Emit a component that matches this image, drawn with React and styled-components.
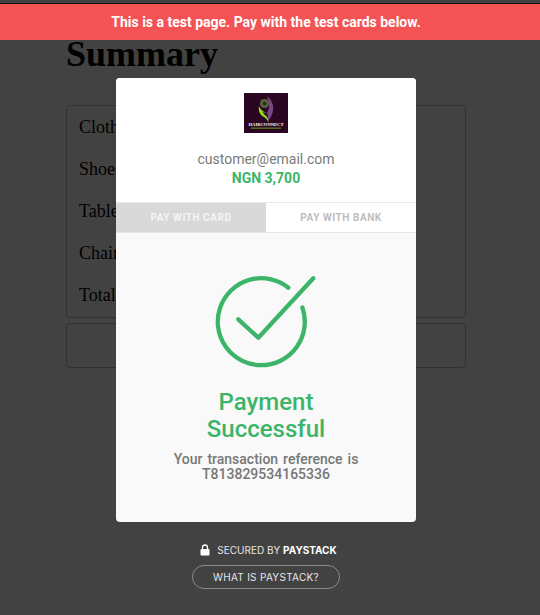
import React from "react";
import styled, { createGlobalStyle } from "styled-components";

const Global = createGlobalStyle`
  html, body { margin: 0; padding: 0; height: 100%; background: #fff; overflow: hidden; }
  #root { height: 615px; position: relative; overflow: hidden; }
  * { box-sizing: border-box; }
`;

const Page = styled.main`
  width: 400px;
  margin: 0 0 0 66px;
  padding-top: 33px;
  font-family: "Liberation Serif", serif;
  font-size: 18px;
  color: #000;
`;
const Title = styled.h1`
  margin: 0 0 30px 0;
  font-size: 36px;
  line-height: 42px;
  font-weight: 700;
`;
const Card = styled.div`
  border: 1px solid rgba(0, 0, 0, 0.25);
  border-radius: 4px;
  height: ${(p) => p.$h}px;
  margin-bottom: 5px;
`;
const ItemRow = styled.div`
  height: 42px;
  padding: 0 12px;
  line-height: 42px;
`;
const Overlay = styled.div`
  position: absolute;
  inset: 0;
  background: rgba(0, 0, 0, 0.74);
  display: flex;
  flex-direction: column;
  align-items: center;
  padding: 4px 8px 0 0;
  font-family: Roboto, sans-serif;
`;
const TopLine = styled.div`
  position: absolute;
  top: 3px;
  left: 0;
  right: 0;
  height: 1px;
  background: #111;
`;
const Banner = styled.div`
  align-self: stretch;
  margin-right: -8px;
  padding-right: 8px;
  height: 36px;
  background: #f35355;
  color: #fff;
  font-size: 14px;
  font-weight: 700;
  line-height: 36px;
  text-align: center;
`;
const Modal = styled.section`
  width: 300px;
  height: 444px;
  margin-top: 38px;
  border-radius: 4px;
  overflow: hidden;
  background: #f9f9f9;
  display: flex;
  flex-direction: column;
`;
const Header = styled.header`
  height: 124px;
  background: #fff;
  display: flex;
  flex-direction: column;
  align-items: center;
  padding-top: 15px;
`;
const LogoBox = styled.svg`
  display: block;
  width: 44px;
  height: 40px;
  margin-bottom: 17px;
`;
const Email = styled.div`
  font-size: 14px;
  line-height: 18px;
  color: #7a7a7a;
`;
const Amount = styled.div`
  font-size: 14px;
  line-height: 20px;
  font-weight: 700;
  color: #3cb568;
`;
const Tabs = styled.nav`
  height: 31px;
  display: flex;
  border-top: 1px solid #e8e8e8;
  border-bottom: 1px solid #e8e8e8;
  background: #fff;
`;
const Tab = styled.div`
  flex: 1;
  font-size: 10px;
  font-weight: 700;
  letter-spacing: 0.55px;
  text-align: center;
  line-height: 29px;
  color: ${(p) => (p.$active ? "#f5f5f5" : "#bdbdbd")};
  background: ${(p) => (p.$active ? "#d9d9d9" : "#fff")};
`;
const Body = styled.div`
  flex: 1;
  display: flex;
  flex-direction: column;
  align-items: center;
  padding-top: 41px;
`;
const Check = styled.svg`
  display: block;
  width: 104px;
  height: 96px;
  margin-bottom: 19px;
`;
const Heading = styled.h2`
  margin: 0 0 9px;
  width: 160px;
  font-size: 24px;
  line-height: 27px;
  font-weight: 500;
  color: #3cb568;
  text-align: center;
`;
const Reference = styled.p`
  margin: 0;
  font-size: 14px;
  line-height: 15px;
  font-weight: 500;
  word-spacing: 1.5px;
  color: #777;
  text-align: center;
`;
const Secured = styled.div`
  margin: 21px 0 0 5px;
  display: flex;
  align-items: center;
  gap: 7px;
  font-family: Inter, sans-serif;
  font-size: 10px;
  line-height: 14px;
  color: #e6e6e6;
  b { color: #fff; font-weight: 700; }
`;
const WhatIs = styled.button`
  margin-top: 8px;
  width: 148px;
  height: 24px;
  border: 1px solid #8a8a8a;
  border-radius: 12px;
  background: transparent;
  padding: 0;
  font-family: Inter, sans-serif;
  font-size: 10px;
  letter-spacing: 0.3px;
  color: #e6e6e6;
`;
const LogoText = styled.text`
  font-family: "Liberation Serif", serif;
  font-size: 4.600px;
  font-weight: 700;
  fill: #fff;
`;

export default function App() {
  return (
    <>
      <Global />
      <Page>
        <Title>Summary</Title>
        <Card $h={213}>
          {["Clothes", "Shoes", "Tables", "Chairs", "Total"].map((t) => (
            <ItemRow key={t}>{t}</ItemRow>
          ))}
        </Card>
        <Card $h={45} />
      </Page>
      <Overlay>
        <TopLine />
        <Banner>This is a test page. Pay with the test cards below.</Banner>
        <Modal>
          <Header>
            <LogoBox viewBox="0 0 44 40">
              <rect width="44" height="40" fill="#2a0622" />
              <path d="M23 3c5 4 7 10 6 15-1 5-3 7-5 10 0-4 0-6-1-8 1-2 2-4 2-7 0-3-1-7-2-10z" fill="#7a4488" />
              <path d="M15 13c-1 5 1 9 5 11 3 2 4 4 4 6 1-3 0-6-3-8-1-1-2-2-2-3 2 1 4 1 5 2-3-2-7-3-9-8z" fill="#93d61c" />
              <circle cx="20.500" cy="10.500" r="4.500" fill="#59683a" />
              <circle cx="20.500" cy="10.500" r="2" fill="#2f2a24" />
              <LogoText x="22" y="33" textAnchor="middle">HAIRCONNECT</LogoText>
              <rect x="7" y="34.500" width="30" height="1.300" fill="#5f7a1c" />
            </LogoBox>
            <Email>customer@email.com</Email>
            <Amount>NGN 3,700</Amount>
          </Header>
          <Tabs>
            <Tab $active>PAY WITH CARD</Tab>
            <Tab>PAY WITH BANK</Tab>
          </Tabs>
          <Body>
            <Check viewBox="0 0 104 96" fill="none" stroke="#3cb568" strokeWidth="4.300" strokeLinecap="round" strokeLinejoin="round">
              <path d="M74.400 13.700A43.500 43.500 0 1 0 88.400 33.500" />
              <path d="M24.300 45.300L44.300 63.700L99.300 4.300" />
            </Check>
            <Heading>Payment Successful</Heading>
            <Reference>Your transaction reference is<br />T813829534165336</Reference>
          </Body>
        </Modal>
        <Secured>
          <svg width="10" height="12" viewBox="0 0 10 12" aria-hidden="true">
            <path d="M2.500 5V3.500a2.500 2.500 0 0 1 5 0V5" fill="none" stroke="#fff" strokeWidth="1.300" />
            <rect x="0.500" y="5" width="9" height="6.500" rx="1" fill="#fff" />
          </svg>
          <span>SECURED BY <b>PAYSTACK</b></span>
        </Secured>
        <WhatIs>WHAT IS PAYSTACK?</WhatIs>
      </Overlay>
    </>
  );
}
